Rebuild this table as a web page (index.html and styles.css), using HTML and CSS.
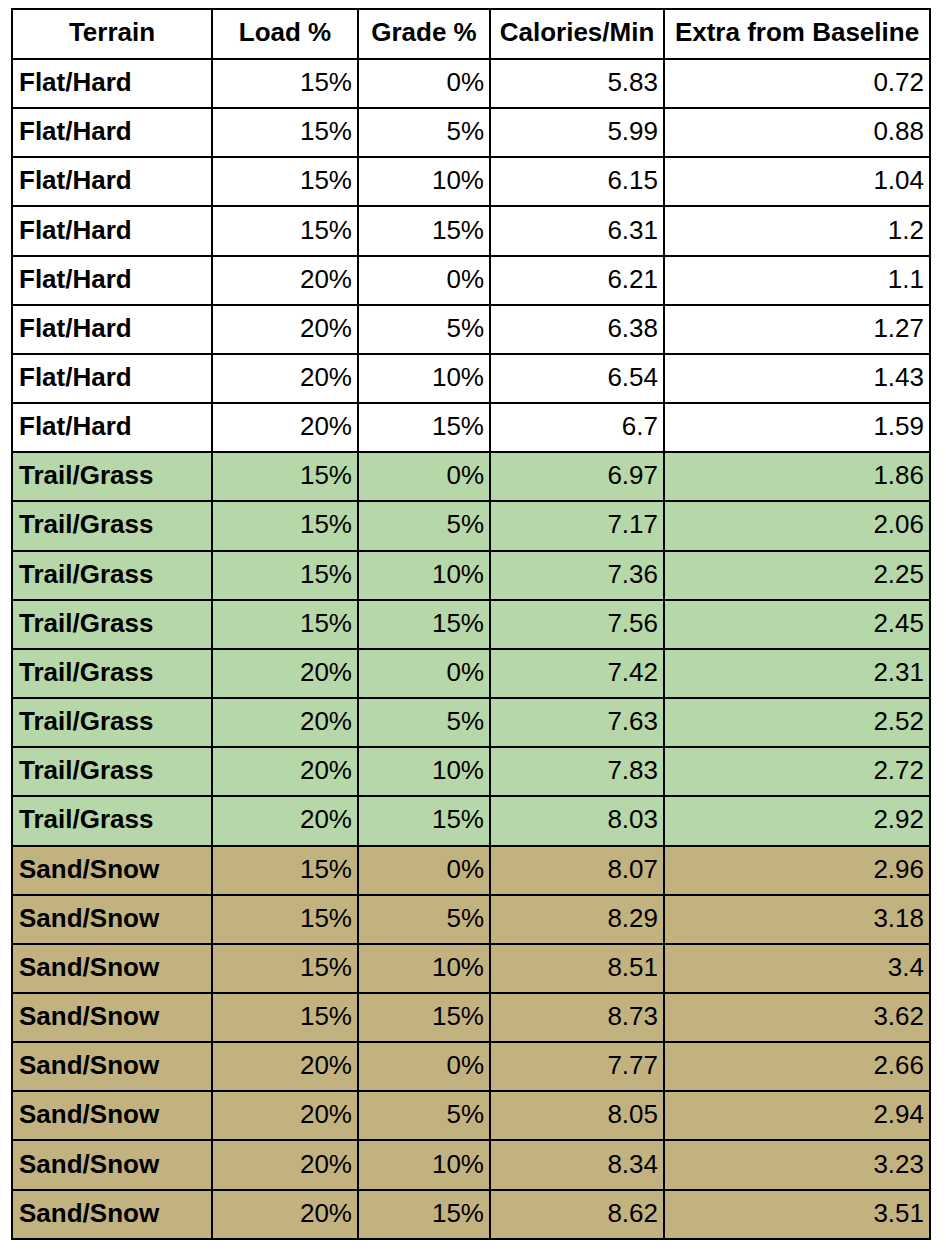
FILE: index.html
```html
<!DOCTYPE html>
<html>
<head>
<meta charset="utf-8">
<link rel="stylesheet" href="styles.css">
</head>
<body>
<table class="sheet">
  <colgroup>
    <col class="c1"><col class="c2"><col class="c3"><col class="c4"><col class="c5">
  </colgroup>
  <thead>
    <tr class="head">
      <th>Terrain</th><th>Load %</th><th>Grade %</th><th>Calories/Min</th><th>Extra from Baseline</th>
    </tr>
  </thead>
  <tbody>
    <tr class="flat"><td class="t">Flat/Hard</td><td>15%</td><td>0%</td><td>5.83</td><td>0.72</td></tr>
    <tr class="flat"><td class="t">Flat/Hard</td><td>15%</td><td>5%</td><td>5.99</td><td>0.88</td></tr>
    <tr class="flat"><td class="t">Flat/Hard</td><td>15%</td><td>10%</td><td>6.15</td><td>1.04</td></tr>
    <tr class="flat"><td class="t">Flat/Hard</td><td>15%</td><td>15%</td><td>6.31</td><td>1.2</td></tr>
    <tr class="flat"><td class="t">Flat/Hard</td><td>20%</td><td>0%</td><td>6.21</td><td>1.1</td></tr>
    <tr class="flat"><td class="t">Flat/Hard</td><td>20%</td><td>5%</td><td>6.38</td><td>1.27</td></tr>
    <tr class="flat"><td class="t">Flat/Hard</td><td>20%</td><td>10%</td><td>6.54</td><td>1.43</td></tr>
    <tr class="flat"><td class="t">Flat/Hard</td><td>20%</td><td>15%</td><td>6.7</td><td>1.59</td></tr>
    <tr class="trail"><td class="t">Trail/Grass</td><td>15%</td><td>0%</td><td>6.97</td><td>1.86</td></tr>
    <tr class="trail"><td class="t">Trail/Grass</td><td>15%</td><td>5%</td><td>7.17</td><td>2.06</td></tr>
    <tr class="trail"><td class="t">Trail/Grass</td><td>15%</td><td>10%</td><td>7.36</td><td>2.25</td></tr>
    <tr class="trail"><td class="t">Trail/Grass</td><td>15%</td><td>15%</td><td>7.56</td><td>2.45</td></tr>
    <tr class="trail"><td class="t">Trail/Grass</td><td>20%</td><td>0%</td><td>7.42</td><td>2.31</td></tr>
    <tr class="trail"><td class="t">Trail/Grass</td><td>20%</td><td>5%</td><td>7.63</td><td>2.52</td></tr>
    <tr class="trail"><td class="t">Trail/Grass</td><td>20%</td><td>10%</td><td>7.83</td><td>2.72</td></tr>
    <tr class="trail"><td class="t">Trail/Grass</td><td>20%</td><td>15%</td><td>8.03</td><td>2.92</td></tr>
    <tr class="sand"><td class="t">Sand/Snow</td><td>15%</td><td>0%</td><td>8.07</td><td>2.96</td></tr>
    <tr class="sand"><td class="t">Sand/Snow</td><td>15%</td><td>5%</td><td>8.29</td><td>3.18</td></tr>
    <tr class="sand"><td class="t">Sand/Snow</td><td>15%</td><td>10%</td><td>8.51</td><td>3.4</td></tr>
    <tr class="sand"><td class="t">Sand/Snow</td><td>15%</td><td>15%</td><td>8.73</td><td>3.62</td></tr>
    <tr class="sand"><td class="t">Sand/Snow</td><td>20%</td><td>0%</td><td>7.77</td><td>2.66</td></tr>
    <tr class="sand"><td class="t">Sand/Snow</td><td>20%</td><td>5%</td><td>8.05</td><td>2.94</td></tr>
    <tr class="sand"><td class="t">Sand/Snow</td><td>20%</td><td>10%</td><td>8.34</td><td>3.23</td></tr>
    <tr class="sand"><td class="t">Sand/Snow</td><td>20%</td><td>15%</td><td>8.62</td><td>3.51</td></tr>
  </tbody>
</table>
</body>
</html>
```
FILE: styles.css
```css
html, body {
  margin: 0;
  padding: 0;
  background: #ffffff;
}
body {
  padding: 8px 0 0 11px;
  font-family: "Liberation Sans", Arial, sans-serif;
  color: #000;
}
.sheet {
  border-collapse: separate;
  border-spacing: 0;
  border-top: 2px solid #000;
  border-left: 2px solid #000;
  table-layout: fixed;
  width: 920px;
  font-size: 26px;
  line-height: 30px;
}
.c1 { width: 200px; }
.c2 { width: 146px; }
.c3 { width: 132px; }
.c4 { width: 174px; }
.c5 { width: 266px; }
.sheet th,
.sheet td {
  box-sizing: border-box;
  border-right: 2px solid #000;
  border-bottom: 2px solid #000;
  padding: 0 5px;
  vertical-align: middle;
  white-space: nowrap;
  overflow: hidden;
}
.sheet th {
  height: 50px;
  font-weight: bold;
  text-align: center;
  padding-bottom: 4px;
}
.sheet td {
  height: 49.17px;
  text-align: right;
  padding-bottom: 3px;
}
.sheet td.t {
  text-align: left;
  font-weight: bold;
  padding-left: 6px;
}
.flat td { background: #ffffff; }
.trail td { background: #b6d7a8; }
.sand td { background: #c2b280; }
```
